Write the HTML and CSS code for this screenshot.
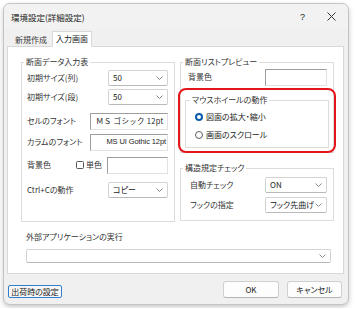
FILE: index.html
```html
<!DOCTYPE html>
<html lang="ja">
<head>
<meta charset="utf-8">
<link rel="stylesheet" href="styles.css">
</head>
<body>
<div class="window">
  <div class="titlebar">
    <span class="title">環境設定(詳細設定)</span>
    <span class="help">?</span>
    <svg class="close" width="9" height="9" viewBox="0 0 9 9"><path d="M0.5 0.5L8.5 8.5M8.5 0.5L0.5 8.5" stroke="#333" stroke-width="1" fill="none"/></svg>
  </div>
  <div class="tabs">
    <div class="tab">新規作成</div>
    <div class="tab active">入力画面</div>
  </div>
  <div class="panel">
    <div class="columns">
      <fieldset class="group group-left">
        <legend>断面データ入力表</legend>
        <div class="row">
          <span class="label">初期サイズ(列)</span>
          <div class="combo w60"><span>50</span><svg class="chev" width="7" height="4" viewBox="0 0 7 4"><polyline points="0.5,0.5 3.5,3.5 6.5,0.5" fill="none" stroke="#8a8a8a"/></svg></div>
        </div>
        <div class="row mt1">
          <span class="label">初期サイズ(段)</span>
          <div class="combo w60"><span>50</span><svg class="chev" width="7" height="4" viewBox="0 0 7 4"><polyline points="0.5,0.5 3.5,3.5 6.5,0.5" fill="none" stroke="#8a8a8a"/></svg></div>
        </div>
        <div class="row mt6">
          <span class="label">セルのフォント</span>
          <div class="edit w78 font-ms">ＭＳ ゴシック 12pt</div>
        </div>
        <div class="row mt3">
          <span class="label">カラムのフォント</span>
          <div class="edit w78 font-ui">MS UI Gothic 12pt</div>
        </div>
        <div class="row mt5">
          <span class="label bg-label">背景色</span>
          <span class="checkbox"></span>
          <span class="check-text">単色</span>
          <div class="edit w61"></div>
        </div>
        <div class="row mt7">
          <span class="label">Ctrl+Cの動作</span>
          <div class="combo w60"><span>コピー</span><svg class="chev" width="7" height="4" viewBox="0 0 7 4"><polyline points="0.5,0.5 3.5,3.5 6.5,0.5" fill="none" stroke="#8a8a8a"/></svg></div>
        </div>
      </fieldset>

      <div class="right-col">
        <fieldset class="group group-preview">
          <legend>断面リストプレビュー</legend>
          <div class="row row-r">
            <span class="label">背景色</span>
            <div class="edit w62"></div>
          </div>
          <div class="wheel">
            <fieldset class="group group-wheel">
              <legend>マウスホイールの動作</legend>
              <div class="row radio-row">
                <span class="radio on"></span><span class="radio-text">図面の拡大・縮小</span>
              </div>
              <div class="row radio-row">
                <span class="radio"></span><span class="radio-text">画面のスクロール</span>
              </div>
            </fieldset>
            <span class="highlight"></span>
          </div>
        </fieldset>

        <fieldset class="group group-check">
          <legend>構造規定チェック</legend>
          <div class="row row-c">
            <span class="label">自動チェック</span>
            <div class="combo w62"><span>ON</span><svg class="chev" width="7" height="4" viewBox="0 0 7 4"><polyline points="0.5,0.5 3.5,3.5 6.5,0.5" fill="none" stroke="#8a8a8a"/></svg></div>
          </div>
          <div class="row row-c mt2">
            <span class="label">フックの指定</span>
            <div class="combo w62"><span>フック先曲げ</span><svg class="chev" width="7" height="4" viewBox="0 0 7 4"><polyline points="0.5,0.5 3.5,3.5 6.5,0.5" fill="none" stroke="#8a8a8a"/></svg></div>
          </div>
        </fieldset>
      </div>
    </div>

    <div class="external">
      <div class="ext-label">外部アプリケーションの実行</div>
      <div class="combo ext-combo"><span></span><svg class="chev" width="7" height="4" viewBox="0 0 7 4"><polyline points="0.5,0.5 3.5,3.5 6.5,0.5" fill="none" stroke="#8a8a8a"/></svg></div>
    </div>
  </div>

  <div class="footer">
    <button class="btn btn-default">出荷時の設定</button>
    <button class="btn btn-ok">OK</button>
    <button class="btn btn-cancel">キャンセル</button>
  </div>
</div>
</body>
</html>
```

FILE: styles.css
```css
* { box-sizing: border-box; }

html, body {
  margin: 0;
  background: #ffffff;
}

body {
  padding: 3px;
  font-family: "Noto Sans CJK JP", "Noto Sans", sans-serif;
  font-size: 8px;
  line-height: 10px;
  color: #2a2a2a;
  font-feature-settings: "palt";
}

.window {
  width: 346px;
  height: 302px;
  background: #f0f0f0;
  border: 1px solid #c4c4c4;
  border-radius: 7px;
  box-shadow: 0 2px 5px rgba(0, 0, 0, 0.22);
  display: flex;
  flex-direction: column;
  overflow: hidden;
}

.titlebar {
  height: 25px;
  flex: none;
  display: flex;
  align-items: center;
  padding: 0 12px 0 7px;
  background: #f2f2f2;
}

.title {
  font-size: 8.5px;
  color: #222;
}

.help {
  margin-left: auto;
  font-size: 9px;
  font-family: "Liberation Sans", sans-serif;
  color: #222;
}

.close {
  margin-left: 22px;
}

.tabs {
  flex: none;
  display: flex;
  align-items: flex-end;
  margin: 2px 0 -1px 7px;
  gap: 1px;
  position: relative;
  z-index: 1;
}

.tab {
  width: 40px;
  height: 14px;
  display: flex;
  align-items: center;
  justify-content: center;
  color: #3a3a3a;
}

.tab.active {
  width: 40px;
  height: 16px;
  background: #ffffff;
  border: 1px solid #d8d8d8;
  border-bottom-color: #ffffff;
  color: #222;
  padding-bottom: 1px;
}

.panel {
  flex: none;
  margin: 0 4px 0 3px;
  height: 228px;
  background: #ffffff;
  border: 1px solid #d8d8d8;
  padding: 10px 9px 0 13px;
}

.columns {
  display: flex;
  align-items: flex-start;
  gap: 5px;
}

.group {
  margin: 0;
  min-width: 0;
  border: 1px solid #dcdcdc;
}

.group legend {
  padding: 0 2px;
  line-height: 10px;
  color: #333;
}

.group-left {
  width: 154px;
  padding: 2px 6px 22px 5px;
}

.group-left legend { margin-left: -3px; }
.group-preview legend { margin-left: -2px; }
.group-wheel legend { margin-left: -5px; }
.group-check legend { margin-left: -7px; }

.row {
  height: 18px;
  display: flex;
  align-items: center;
}

.mt1 { margin-top: 1px; }
.mt2 { margin-top: 2px; }
.mt3 { margin-top: 3px; }
.mt5 { margin-top: 5px; }
.mt6 { margin-top: 6px; }
.mt7 { margin-top: 7px; }

.label {
  color: #333;
  white-space: nowrap;
}

.combo {
  margin-left: auto;
  height: 16px;
  background: #ffffff;
  border: 1px solid #d3d3d3;
  border-bottom-color: #b9b9b9;
  border-radius: 2px;
  display: flex;
  align-items: center;
  justify-content: space-between;
  padding: 0 4px 0 4px;
  color: #222;
  white-space: nowrap;
}

.chev {
  flex: none;
}

.w60 { width: 60px; }
.w61 { width: 61px; }
.w62 { width: 62px; }
.w78 { width: 78px; }

.edit {
  margin-left: auto;
  height: 17px;
  background: #ffffff;
  border: 1px solid;
  border-color: #9d9d9d #e2e2e2 #e2e2e2 #9d9d9d;
  display: flex;
  align-items: center;
  white-space: nowrap;
  overflow: hidden;
  color: #222;
}

.font-ms {
  padding-left: 5px;
  letter-spacing: 0.3px;
  font-feature-settings: normal;
  font-size: 7.5px;
}

.font-ui {
  justify-content: flex-end;
  padding-right: 1px;
  font-family: "Liberation Sans", sans-serif;
  font-size: 7.5px;
  letter-spacing: -0.1px;
}

.bg-label {
  width: 49px;
}

.checkbox {
  width: 8px;
  height: 8px;
  border: 1px solid #555;
  border-radius: 1.5px;
  background: #fff;
  flex: none;
}

.check-text {
  margin-left: 2px;
  color: #333;
}

.right-col {
  width: 154px;
  display: flex;
  flex-direction: column;
}

.group-preview {
  padding: 1px 4px 4px 4px;
}

.row-r {
  padding: 0 2px 0 3px;
}

.wheel {
  position: relative;
  margin-top: 9px;
}

.group-wheel {
  padding: 3px 4px 3px 9px;
}

.radio-row {
  height: 18px;
}

.radio {
  width: 8px;
  height: 8px;
  border-radius: 50%;
  border: 1px solid #5e5e5e;
  background: #fff;
  flex: none;
}

.radio.on {
  border: 2.5px solid #0b5cad;
  background: #ffffff;
}

.radio-text {
  margin-left: 3px;
  color: #222;
}

.highlight {
  position: absolute;
  top: -7px;
  left: -7px;
  right: -7px;
  bottom: -5px;
  border: 2px solid #e4161b;
  border-radius: 8px;
  pointer-events: none;
}

.group-check {
  margin-top: 10px;
  padding: 3px 6px 6px 9px;
}

.external {
  padding: 10px 0 0 5px;
}

.ext-label {
  color: #333;
}

.ext-combo {
  margin: 7px 0 0 0;
  width: 305px;
  height: 14px;
}

.footer {
  flex: none;
  margin-top: 7px;
  height: 17px;
  display: flex;
  align-items: flex-end;
  padding: 0 6px 0 4px;
  gap: 8px;
}

.btn {
  font-family: inherit;
  font-size: 8px;
  line-height: 10px;
  font-feature-settings: "palt";
  color: #222;
  background: #fdfdfd;
  border: 1px solid #d0d0d0;
  border-bottom-color: #b5b5b5;
  border-radius: 3px;
  padding: 0;
  margin: 0;
  height: 17px;
}

.btn-default {
  width: 54px;
  height: 13px;
  border: 1px solid #2f7fd0;
  border-radius: 2px;
  background: #f7f7f7;
  margin-right: auto;
}

.btn-ok {
  width: 56px;
}

.btn-cancel {
  width: 55px;
}
```
